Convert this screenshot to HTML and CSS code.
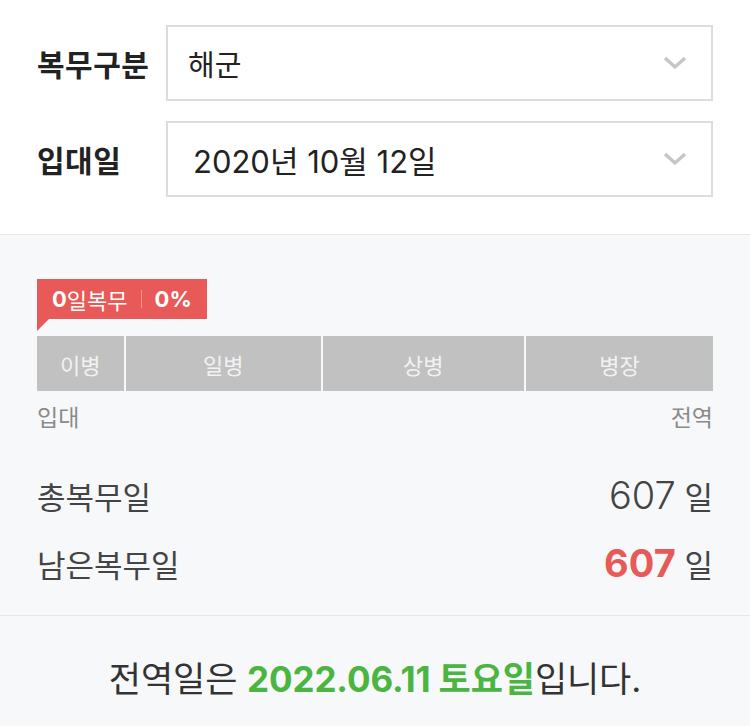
FILE: index.html
```html
<!DOCTYPE html>
<html lang="ko">
<head>
  <meta charset="UTF-8" />
  <meta name="viewport" content="width=device-width, initial-scale=1.0"/>
  <title>전역일 계산기</title>
  <link rel="stylesheet" href="styles.css">
</head>
<body>
  <section class="form">
    <div class="row">
      <span class="label">복무구분</span>
      <div class="select">
        <span class="value">해군</span>
        <svg class="chevron" width="24" height="14" viewBox="0 0 24 14"><path d="M2 2l10 9 10-9" fill="none" stroke="#c6c6c6" stroke-width="3.5"/></svg>
      </div>
    </div>
    <div class="row">
      <span class="label">입대일</span>
      <div class="select">
        <span class="value date">2020년 10월 12일</span>
        <svg class="chevron" width="24" height="14" viewBox="0 0 24 14"><path d="M2 2l10 9 10-9" fill="none" stroke="#c6c6c6" stroke-width="3.5"/></svg>
      </div>
    </div>
  </section>

  <section class="progress">
    <div class="badge"><b>0</b>일복무<span class="sep"></span><b>0%</b></div>
    <div class="ranks">
      <div class="rank" style="flex: 87">이병</div>
      <div class="rank" style="flex: 196">일병</div>
      <div class="rank" style="flex: 202">상병</div>
      <div class="rank" style="flex: 188">병장</div>
    </div>
    <div class="ends">
      <span>입대</span>
      <span>전역</span>
    </div>

    <div class="stat">
      <span class="name">총복무일</span>
      <span class="days"><em>607</em> 일</span>
    </div>
    <div class="stat">
      <span class="name">남은복무일</span>
      <span class="days"><em class="left">607</em> 일</span>
    </div>
  </section>

  <section class="result">
    전역일은 <strong>2022.06.11 토요일</strong>입니다.
  </section>
</body>
</html>
```

FILE: styles.css
```css
:root {
  --text: #333;
  --red: #e85a58;
  --green: #4ab540;
  --bar: #c1c1c1;
  --soft: #f7f8fa;
}

body {
  margin: 0;
  font-family: Inter, "Noto Sans CJK KR", sans-serif;
  color: var(--text);
  background: var(--soft);
}

.form {
  background: #fff;
  padding: 25px 37px 37px;
  border-bottom: 1px solid #e8e9ec;
}

.row {
  display: flex;
  align-items: center;
}

.row + .row {
  margin-top: 20px;
}

.label {
  width: 129px;
  font-size: 30px;
  font-weight: bold;
  color: #222;
  letter-spacing: 0.5px;
}

.select {
  flex: 1;
  height: 72px;
  border: 2px solid #dcdcdc;
  display: flex;
  align-items: center;
  justify-content: space-between;
  padding: 0 24px 0 20px;
}

.value {
  font-size: 29px;
  color: #222;
}

.value.date {
  margin-left: 5px;
  font-size: 31px;
  letter-spacing: 0;
}

.progress {
  padding: 44px 37px 18px;
  border-bottom: 1px solid #e8e9ee;
}

.badge {
  position: relative;
  display: inline-flex;
  align-items: center;
  height: 40px;
  padding: 0 15px;
  background: var(--red);
  color: #fff;
  font-size: 22px;
}

.badge::after {
  content: "";
  position: absolute;
  left: 0;
  top: 40px;
  border-top: 12px solid var(--red);
  border-right: 12px solid transparent;
}

.badge b {
  font-weight: bold;
}

.sep {
  width: 1px;
  height: 18px;
  background: #f29896;
  margin: 0 13px;
}

.ranks {
  display: flex;
  gap: 2px;
  margin-top: 17px;
  height: 55px;
}

.rank {
  background: var(--bar);
  color: #f2f2f2;
  font-size: 22px;
  display: flex;
  align-items: center;
  justify-content: center;
}

.ends {
  display: flex;
  justify-content: space-between;
  color: #8a8a8a;
  font-size: 23px;
  margin-top: 8px;
}

.stat {
  display: flex;
  justify-content: space-between;
  align-items: center;
  height: 68px;
  font-size: 31px;
  color: #444;
}

.ends + .stat {
  margin-top: 28px;
}

.days em {
  font-style: normal;
  font-size: 38px;
  font-weight: 300;
}

.days em.left {
  color: var(--red);
  font-weight: bold;
}

.result {
  text-align: center;
  font-size: 35px;
  color: #333;
  padding: 35px 0 0;
  letter-spacing: -0.1px;
}

.result strong {
  color: var(--green);
}
```
